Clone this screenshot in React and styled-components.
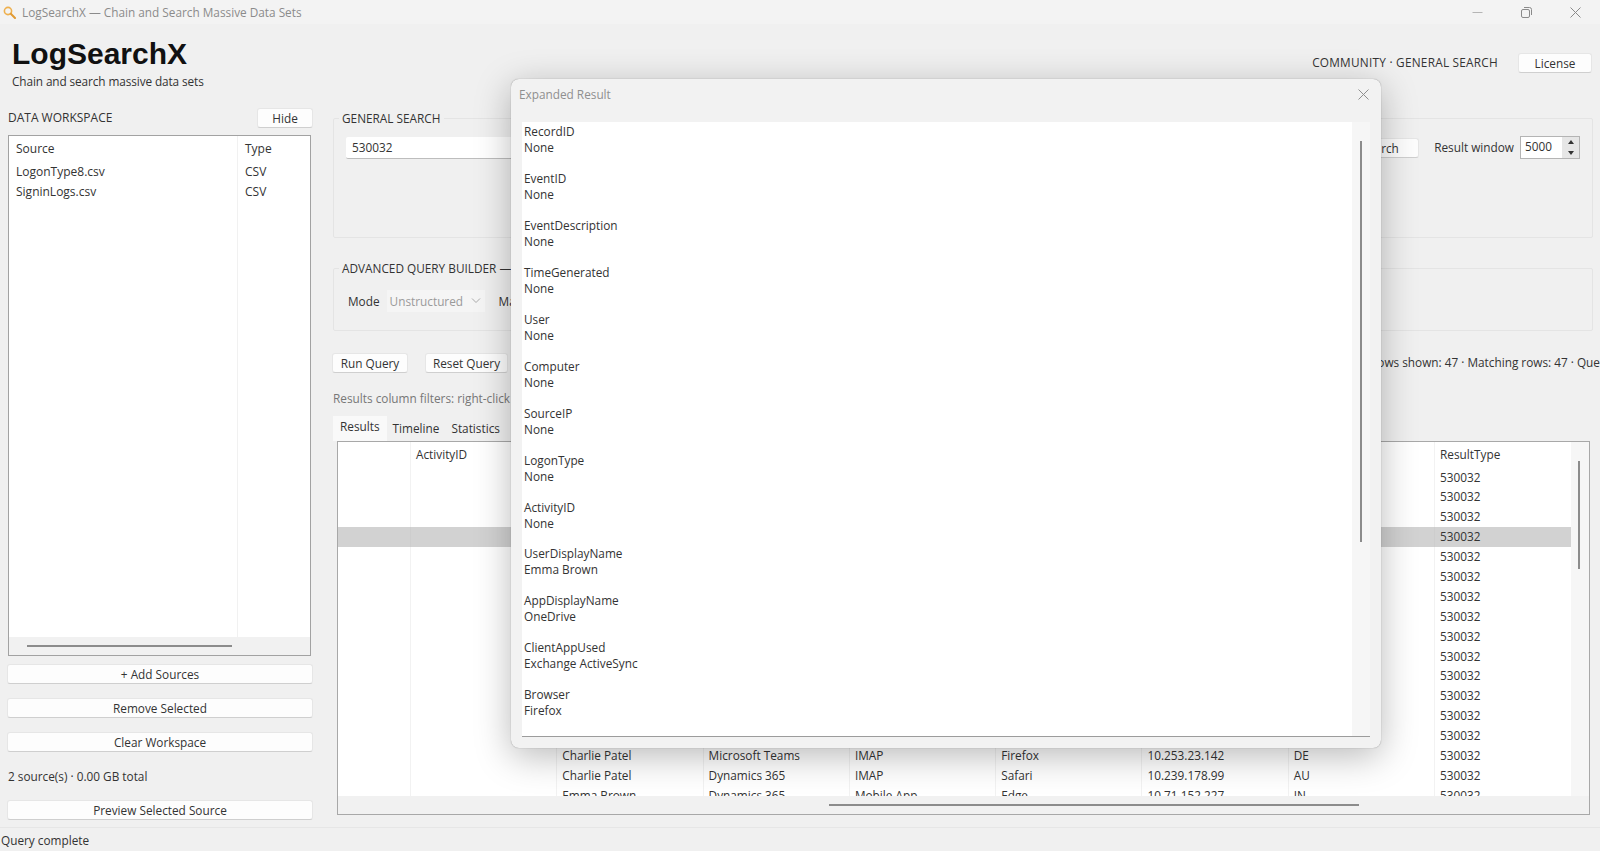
import React from 'react';
import styled, { createGlobalStyle } from 'styled-components';

const GlobalStyle = createGlobalStyle`
	html, body {
		margin: 0;
		padding: 0;
		background: #f0f0f0;
		overflow: hidden;
	}
	* {
		box-sizing: border-box;
	}
	body {
		font-family: "Open Sans", "Noto Sans", sans-serif;
		font-size: 11.8px;
		color: #333;
	}
`;

const Page = styled.div`
	position: relative;
	width: 1600px;
	height: 851px;
	overflow: hidden;
	display: flex;
	flex-direction: column;
	background: #f0f0f0;
`;

const TitleBar = styled.div`
	height: 24px;
	flex: none;
	display: flex;
	align-items: center;
	padding-left: 3px;
	background: #f3f3f3;
	color: #8b8b8b;
`;

const TitleText = styled.span`
	margin-left: 6px;
`;

const WindowControls = styled.div`
	margin-left: auto;
	display: flex;
	align-items: center;
	gap: 38px;
	padding-right: 19px;
	color: #8a8a8a;
`;

const Header = styled.header`
	height: 84px;
	flex: none;
	display: flex;
	padding: 12px 8px 0 12px;
`;

const Brand = styled.div`
	display: flex;
	flex-direction: column;
`;

const Logo = styled.h1`
	margin: 0;
	font-family: "Liberation Sans", Arial, sans-serif;
	font-size: 30px;
	line-height: 36px;
	font-weight: 700;
	color: #111;
`;

const Tagline = styled.span`
	margin-top: 1px;
	letter-spacing: -0.1px;
	line-height: 16px;
`;

const Edition = styled.div`
	margin-left: auto;
	margin-top: 17px;
	height: 20px;
	display: flex;
	align-items: center;
	gap: 20px;
`;

const EditionLabel = styled.span`
	letter-spacing: 0.25px;
	padding-bottom: 3px;
`;

const Button = styled.button`
	height: 20px;
	width: ${(p) => p.$width || 'auto'};
	margin-left: ${(p) => p.$left || 0}px;
	padding: 0;
	flex: none;
	font: inherit;
	line-height: 18px;
	white-space: nowrap;
	color: #333;
	background: #fdfdfd;
	border: 1px solid #e6e6e6;
	border-bottom-color: #cfcfcf;
	border-radius: 3px;
`;

const Body = styled.div`
	flex: 1;
	min-height: 0;
	display: flex;
	gap: 20px;
	padding: 0 7px 7px;
`;

const Sidebar = styled.aside`
	width: 306px;
	flex: none;
	display: flex;
	flex-direction: column;
`;

const SidebarTop = styled.div`
	height: 20px;
	flex: none;
	display: flex;
	align-items: center;
	justify-content: space-between;
	padding-left: 1px;
	margin-bottom: 7px;
`;

const SidebarHeading = styled.span`
	font-size: 12px;
	padding-bottom: 2px;
`;

const SourceList = styled.div`
	flex: 1;
	min-height: 0;
	margin: 0 2px 8px 1px;
	display: flex;
	flex-direction: column;
	background: #fff;
	border: 1.5px solid #a2a2a2;
`;

const SourceColumns = styled.div`
	flex: 1;
	min-height: 0;
	display: grid;
	grid-template-columns: 228px 1fr;
	grid-template-rows: 26px 20px 20px 1fr;
	font-size: 12px;
`;

const SourceCell = styled.div`
	padding: ${(p) => (p.$head ? '3px 0 0 7px' : '0 0 0 7px')};
	line-height: 20px;
	border-left: ${(p) => (p.$side ? '1px solid #f1f1f1' : 'none')};
`;

const HorizontalTrack = styled.div`
	height: ${(p) => p.$height}px;
	flex: none;
	display: flex;
	align-items: center;
	padding-left: ${(p) => p.$from}px;
	background: #f1f1f1;
`;

const HorizontalThumb = styled.div`
	width: ${(p) => p.$size}px;
	height: 2px;
	background: #8c8c8c;
`;

const SideButton = styled(Button)`
	width: 100%;
	margin-bottom: 14px;
	&:last-child {
		margin-bottom: 0;
	}
`;

const SourceSummary = styled.div`
	height: 20px;
	line-height: 20px;
	margin: 0 0 14px 1px;
`;

const Main = styled.main`
	flex: 1;
	min-width: 0;
	display: flex;
	flex-direction: column;
`;

const Group = styled.fieldset`
	margin: ${(p) => p.$top}px 0 0;
	height: ${(p) => p.$height}px;
	flex: none;
	padding: 0 12px;
	border: 1px solid #e4e4e4;
	border-radius: 2px;
	min-width: 0;
`;

const GroupTitle = styled.legend`
	margin-left: -7px;
	padding: 0 4px 0 3px;
	line-height: 16px;
	white-space: nowrap;
`;

const SearchRow = styled.div`
	margin-top: 10px;
	display: flex;
	align-items: center;
`;

const SearchInput = styled.input`
	flex: 1;
	min-width: 0;
	height: 22px;
	padding: 0 6px;
	font: inherit;
	color: #333;
	background: #fff;
	border: none;
	border-bottom: 1px solid #bdbdbd;
	border-radius: 2px;
`;

const WindowLabel = styled.span`
	margin: 0 6px 1px 15px;
`;

const Spin = styled.div`
	width: 60px;
	height: 23px;
	display: flex;
	border: 1px solid #b4b4b4;
	background: #e6e6e6;
`;

const SpinValue = styled.div`
	flex: 1;
	padding-left: 4px;
	line-height: 19px;
	background: #fff;
`;

const SpinArrows = styled.div`
	width: 17px;
	display: flex;
	flex-direction: column;
	align-items: center;
	justify-content: space-around;
`;

const SpinArrow = styled.div`
	width: 0;
	height: 0;
	border-left: 3px solid transparent;
	border-right: 3px solid transparent;
	border-bottom: ${(p) => (p.$up ? '4px solid #333' : 'none')};
	border-top: ${(p) => (p.$up ? 'none' : '4px solid #333')};
`;

const ModeRow = styled.div`
	margin-top: 14px;
	padding-left: 2px;
	display: flex;
	align-items: center;
	gap: 7px;
`;

const ModeSelect = styled.div`
	width: 98px;
	height: 22px;
	padding: 0 4px 0 3px;
	display: flex;
	align-items: center;
	justify-content: space-between;
	color: #9a9a9a;
	background: #f5f5f5;
`;

const ModeNext = styled.span`
	margin-left: 7px;
`;

const QueryBar = styled.div`
	margin: 22px 0 0 -1px;
	height: 20px;
	flex: none;
	display: flex;
	align-items: center;
`;

const QueryInfo = styled.span`
	margin: 0 0 2px 862px;
	white-space: nowrap;
`;

const FilterHint = styled.div`
	margin-top: 17px;
	line-height: 16px;
	color: #777;
	white-space: nowrap;
`;

const Tabs = styled.div`
	margin-top: 10px;
	height: 25px;
	flex: none;
	display: flex;
	align-items: flex-end;
`;

const Tab = styled.div`
	height: 25px;
	padding: ${(p) => (p.$active ? '0 7px 6px' : '0 6px 2px')};
	display: flex;
	align-items: center;
	background: ${(p) => (p.$active ? '#f9f9f9' : '#f0f0f0')};
`;

const TableFrame = styled.div`
	margin-left: 4px;
	width: 1253px;
	height: 374px;
	flex: none;
	display: flex;
	flex-direction: column;
	background: #fff;
	border: 1px solid #a8a8a8;
`;

const TableBody = styled.div`
	flex: 1;
	min-height: 0;
	display: flex;
`;

const Grid = styled.div`
	flex: 1;
	min-width: 0;
	overflow: hidden;
`;

const Cell = styled.div`
	padding-left: 5px;
	line-height: ${(p) => (p.$head ? '25px' : '19px')};
	white-space: nowrap;
	overflow: hidden;
	border-left: 1px solid #f2f2f2;
	&:first-child {
		border-left: none;
	}
`;

const Row = styled.div`
	height: ${(p) => (p.$head ? '25.5px' : '19.9px')};
	display: grid;
	grid-template-columns: 72px repeat(7, 146.3px) 1fr;
	background: ${(p) => (p.$selected ? '#d2d2d2' : 'transparent')};
	${Cell} {
		border-left-color: ${(p) => (p.$selected ? '#cdcdcd' : '#f2f2f2')};
	}
`;

const VerticalTrack = styled.div`
	width: ${(p) => p.$width}px;
	flex: none;
	padding: ${(p) => p.$top}px 0 0 ${(p) => p.$left}px;
	background: #f6f6f6;
`;

const VerticalThumb = styled.div`
	width: 2px;
	height: ${(p) => p.$size}px;
	background: #8c8c8c;
`;

const StatusBar = styled.footer`
	height: 24px;
	flex: none;
	padding-left: 1px;
	line-height: 25px;
	border-top: 1px solid #e6e6e6;
`;

const Modal = styled.div`
	position: absolute;
	left: 511px;
	top: 79px;
	width: 870px;
	height: 669px;
	display: flex;
	flex-direction: column;
	padding: 0 11px 11px;
	background: #f2f2f2;
	border-radius: 8px;
	box-shadow: 0 0 1px rgba(0, 0, 0, 0.45), 0 8px 36px rgba(0, 0, 0, 0.28);
`;

const ModalHead = styled.div`
	height: 43px;
	flex: none;
	display: flex;
	align-items: center;
	justify-content: space-between;
	padding: 0 1px 13px 0;
	margin-left: -3px;
	color: #8f8f8f;
`;

const ModalContent = styled.div`
	flex: 1;
	min-height: 0;
	display: flex;
	border-bottom: 1px solid #9c9c9c;
`;

const FieldList = styled.div`
	flex: 1;
	padding-top: 1px;
	padding-left: 2px;
	background: #fff;
`;

const Field = styled.div`
	height: 46.95px;
	line-height: 16px;
`;

const FieldLine = styled.div`
	height: 16px;
`;

const SearchGlyph = () => (
	<svg width="13" height="13" viewBox="0 0 13 13" fill="none">
		<circle cx="5" cy="5" r="3.6" stroke="#eeb04e" strokeWidth="1.6" />
		<path d="M7.8 7.8 12 12" stroke="#e09a33" strokeWidth="2" strokeLinecap="round" />
	</svg>
);

const MinimizeGlyph = () => (
	<svg width="11" height="11" viewBox="0 0 11 11" stroke="#b5b5b5" strokeWidth="1" fill="none">
		<path d="M0.5 5.5h10" />
	</svg>
);

const RestoreGlyph = () => (
	<svg width="11" height="11" viewBox="0 0 11 11" stroke="currentColor" strokeWidth="1" fill="none">
		<rect x="0.5" y="2.5" width="8" height="8" rx="1.5" />
		<path d="M3 .5h5.5a2 2 0 0 1 2 2V8" />
	</svg>
);

const CloseGlyph = () => (
	<svg width="11" height="11" viewBox="0 0 11 11" stroke="currentColor" strokeWidth="1" fill="none">
		<path d="M.5.5l10 10M10.5.5l-10 10" />
	</svg>
);

const Chevron = () => (
	<svg width="10" height="6" viewBox="0 0 10 6" stroke="#aaa" strokeWidth="1" fill="none">
		<path d="M1 .5l4 4 4-4" />
	</svg>
);

const fields = [
	['RecordID', 'None'],
	['EventID', 'None'],
	['EventDescription', 'None'],
	['TimeGenerated', 'None'],
	['User', 'None'],
	['Computer', 'None'],
	['SourceIP', 'None'],
	['LogonType', 'None'],
	['ActivityID', 'None'],
	['UserDisplayName', 'Emma Brown'],
	['AppDisplayName', 'OneDrive'],
	['ClientAppUsed', 'Exchange ActiveSync'],
	['Browser', 'Firefox'],
];

const columns = ['', 'ActivityID', 'UserDisplayName', 'AppDisplayName', 'ClientAppUsed', 'Browser', 'IPAddress', 'Country', 'ResultType'];

const rows = [
	['Emma Brown', 'OneDrive', 'Exchange ActiveSync', 'Firefox', '10.18.44.201', 'US'],
	['Charlie Patel', 'Dynamics 365', 'IMAP', 'Edge', '10.92.7.63', 'DE'],
	['Emma Brown', 'Microsoft Teams', 'Mobile App', 'Safari', '10.140.32.18', 'IN'],
	['Emma Brown', 'OneDrive', 'Exchange ActiveSync', 'Firefox', '10.77.210.5', 'AU'],
	['Charlie Patel', 'OneDrive', 'IMAP', 'Chrome', '10.33.91.120', 'US'],
	['Emma Brown', 'Dynamics 365', 'Mobile App', 'Edge', '10.201.15.74', 'DE'],
	['Charlie Patel', 'Microsoft Teams', 'IMAP', 'Safari', '10.64.188.9', 'IN'],
	['Emma Brown', 'OneDrive', 'Mobile App', 'Firefox', '10.125.60.41', 'AU'],
	['Charlie Patel', 'Dynamics 365', 'Exchange ActiveSync', 'Chrome', '10.8.143.77', 'US'],
	['Emma Brown', 'Microsoft Teams', 'IMAP', 'Edge', '10.176.29.102', 'DE'],
	['Charlie Patel', 'OneDrive', 'Mobile App', 'Safari', '10.52.240.16', 'IN'],
	['Emma Brown', 'Dynamics 365', 'IMAP', 'Firefox', '10.99.71.230', 'AU'],
	['Charlie Patel', 'Microsoft Teams', 'Exchange ActiveSync', 'Chrome', '10.219.6.88', 'US'],
	['Emma Brown', 'OneDrive', 'Mobile App', 'Edge', '10.41.128.55', 'DE'],
	['Charlie Patel', 'Microsoft Teams', 'IMAP', 'Firefox', '10.253.23.142', 'DE'],
	['Charlie Patel', 'Dynamics 365', 'IMAP', 'Safari', '10.239.178.99', 'AU'],
	['Emma Brown', 'Dynamics 365', 'Mobile App', 'Edge', '10.71.152.227', 'IN'],
];

const App = () => (
	<Page>
		<GlobalStyle />
		<TitleBar>
			<SearchGlyph />
			<TitleText>LogSearchX — Chain and Search Massive Data Sets</TitleText>
			<WindowControls>
				<MinimizeGlyph />
				<RestoreGlyph />
				<CloseGlyph />
			</WindowControls>
		</TitleBar>

		<Header>
			<Brand>
				<Logo>LogSearchX</Logo>
				<Tagline>Chain and search massive data sets</Tagline>
			</Brand>
			<Edition>
				<EditionLabel>COMMUNITY · GENERAL SEARCH</EditionLabel>
				<Button $width="74px">License</Button>
			</Edition>
		</Header>

		<Body>
			<Sidebar>
				<SidebarTop>
					<SidebarHeading>DATA WORKSPACE</SidebarHeading>
					<Button $width="56px">Hide</Button>
				</SidebarTop>
				<SourceList>
					<SourceColumns>
						<SourceCell $head>Source</SourceCell>
						<SourceCell $head $side>Type</SourceCell>
						<SourceCell>LogonType8.csv</SourceCell>
						<SourceCell $side>CSV</SourceCell>
						<SourceCell>SigninLogs.csv</SourceCell>
						<SourceCell $side>CSV</SourceCell>
						<SourceCell />
						<SourceCell $side />
					</SourceColumns>
					<HorizontalTrack $height={18} $from={18}>
						<HorizontalThumb $size={205} />
					</HorizontalTrack>
				</SourceList>
				<SideButton>+ Add Sources</SideButton>
				<SideButton>Remove Selected</SideButton>
				<SideButton>Clear Workspace</SideButton>
				<SourceSummary>2 source(s) · 0.00 GB total</SourceSummary>
				<SideButton>Preview Selected Source</SideButton>
			</Sidebar>

			<Main>
				<Group $top={2} $height={128}>
					<GroupTitle>GENERAL SEARCH</GroupTitle>
					<SearchRow>
						<SearchInput defaultValue="530032" />
						<Button $width="78px" $left={11}>Search</Button>
						<WindowLabel>Result window</WindowLabel>
						<Spin>
							<SpinValue>5000</SpinValue>
							<SpinArrows>
								<SpinArrow $up />
								<SpinArrow />
							</SpinArrows>
						</Spin>
					</SearchRow>
				</Group>

				<Group $top={22} $height={71}>
					<GroupTitle>ADVANCED QUERY BUILDER —</GroupTitle>
					<ModeRow>
						<span>Mode</span>
						<ModeSelect>
							Unstructured
							<Chevron />
						</ModeSelect>
						<ModeNext>Match</ModeNext>
					</ModeRow>
				</Group>

				<QueryBar>
					<Button $width="76px">Run Query</Button>
					<Button $width="83px" $left={17}>Reset Query</Button>
					<QueryInfo>Rows shown: 47 · Matching rows: 47 · Query</QueryInfo>
				</QueryBar>

				<FilterHint>Results column filters: right-click a column header</FilterHint>

				<Tabs>
					<Tab $active>Results</Tab>
					<Tab>Timeline</Tab>
					<Tab>Statistics</Tab>
				</Tabs>

				<TableFrame>
					<TableBody>
						<Grid>
							<Row $head>
								{columns.map((name, i) => (
									<Cell $head key={i}>{name}</Cell>
								))}
							</Row>
							{rows.map((row, i) => (
								<Row key={i} $selected={i === 3}>
									<Cell />
									<Cell />
									{row.map((value, j) => (
										<Cell key={j}>{value}</Cell>
									))}
									<Cell>530032</Cell>
								</Row>
							))}
						</Grid>
						<VerticalTrack $width={18} $top={19} $left={7}>
							<VerticalThumb $size={108} />
						</VerticalTrack>
					</TableBody>
					<HorizontalTrack $height={18} $from={491}>
						<HorizontalThumb $size={530} />
					</HorizontalTrack>
				</TableFrame>
			</Main>
		</Body>

		<StatusBar>Query complete</StatusBar>

		<Modal>
			<ModalHead>
				<span>Expanded Result</span>
				<CloseGlyph />
			</ModalHead>
			<ModalContent>
				<FieldList>
					{fields.map(([label, value]) => (
						<Field key={label}>
							<FieldLine>{label}</FieldLine>
							<FieldLine>{value}</FieldLine>
						</Field>
					))}
				</FieldList>
				<VerticalTrack $width={18} $top={19} $left={8}>
					<VerticalThumb $size={401} />
				</VerticalTrack>
			</ModalContent>
		</Modal>
	</Page>
);

export default App;
